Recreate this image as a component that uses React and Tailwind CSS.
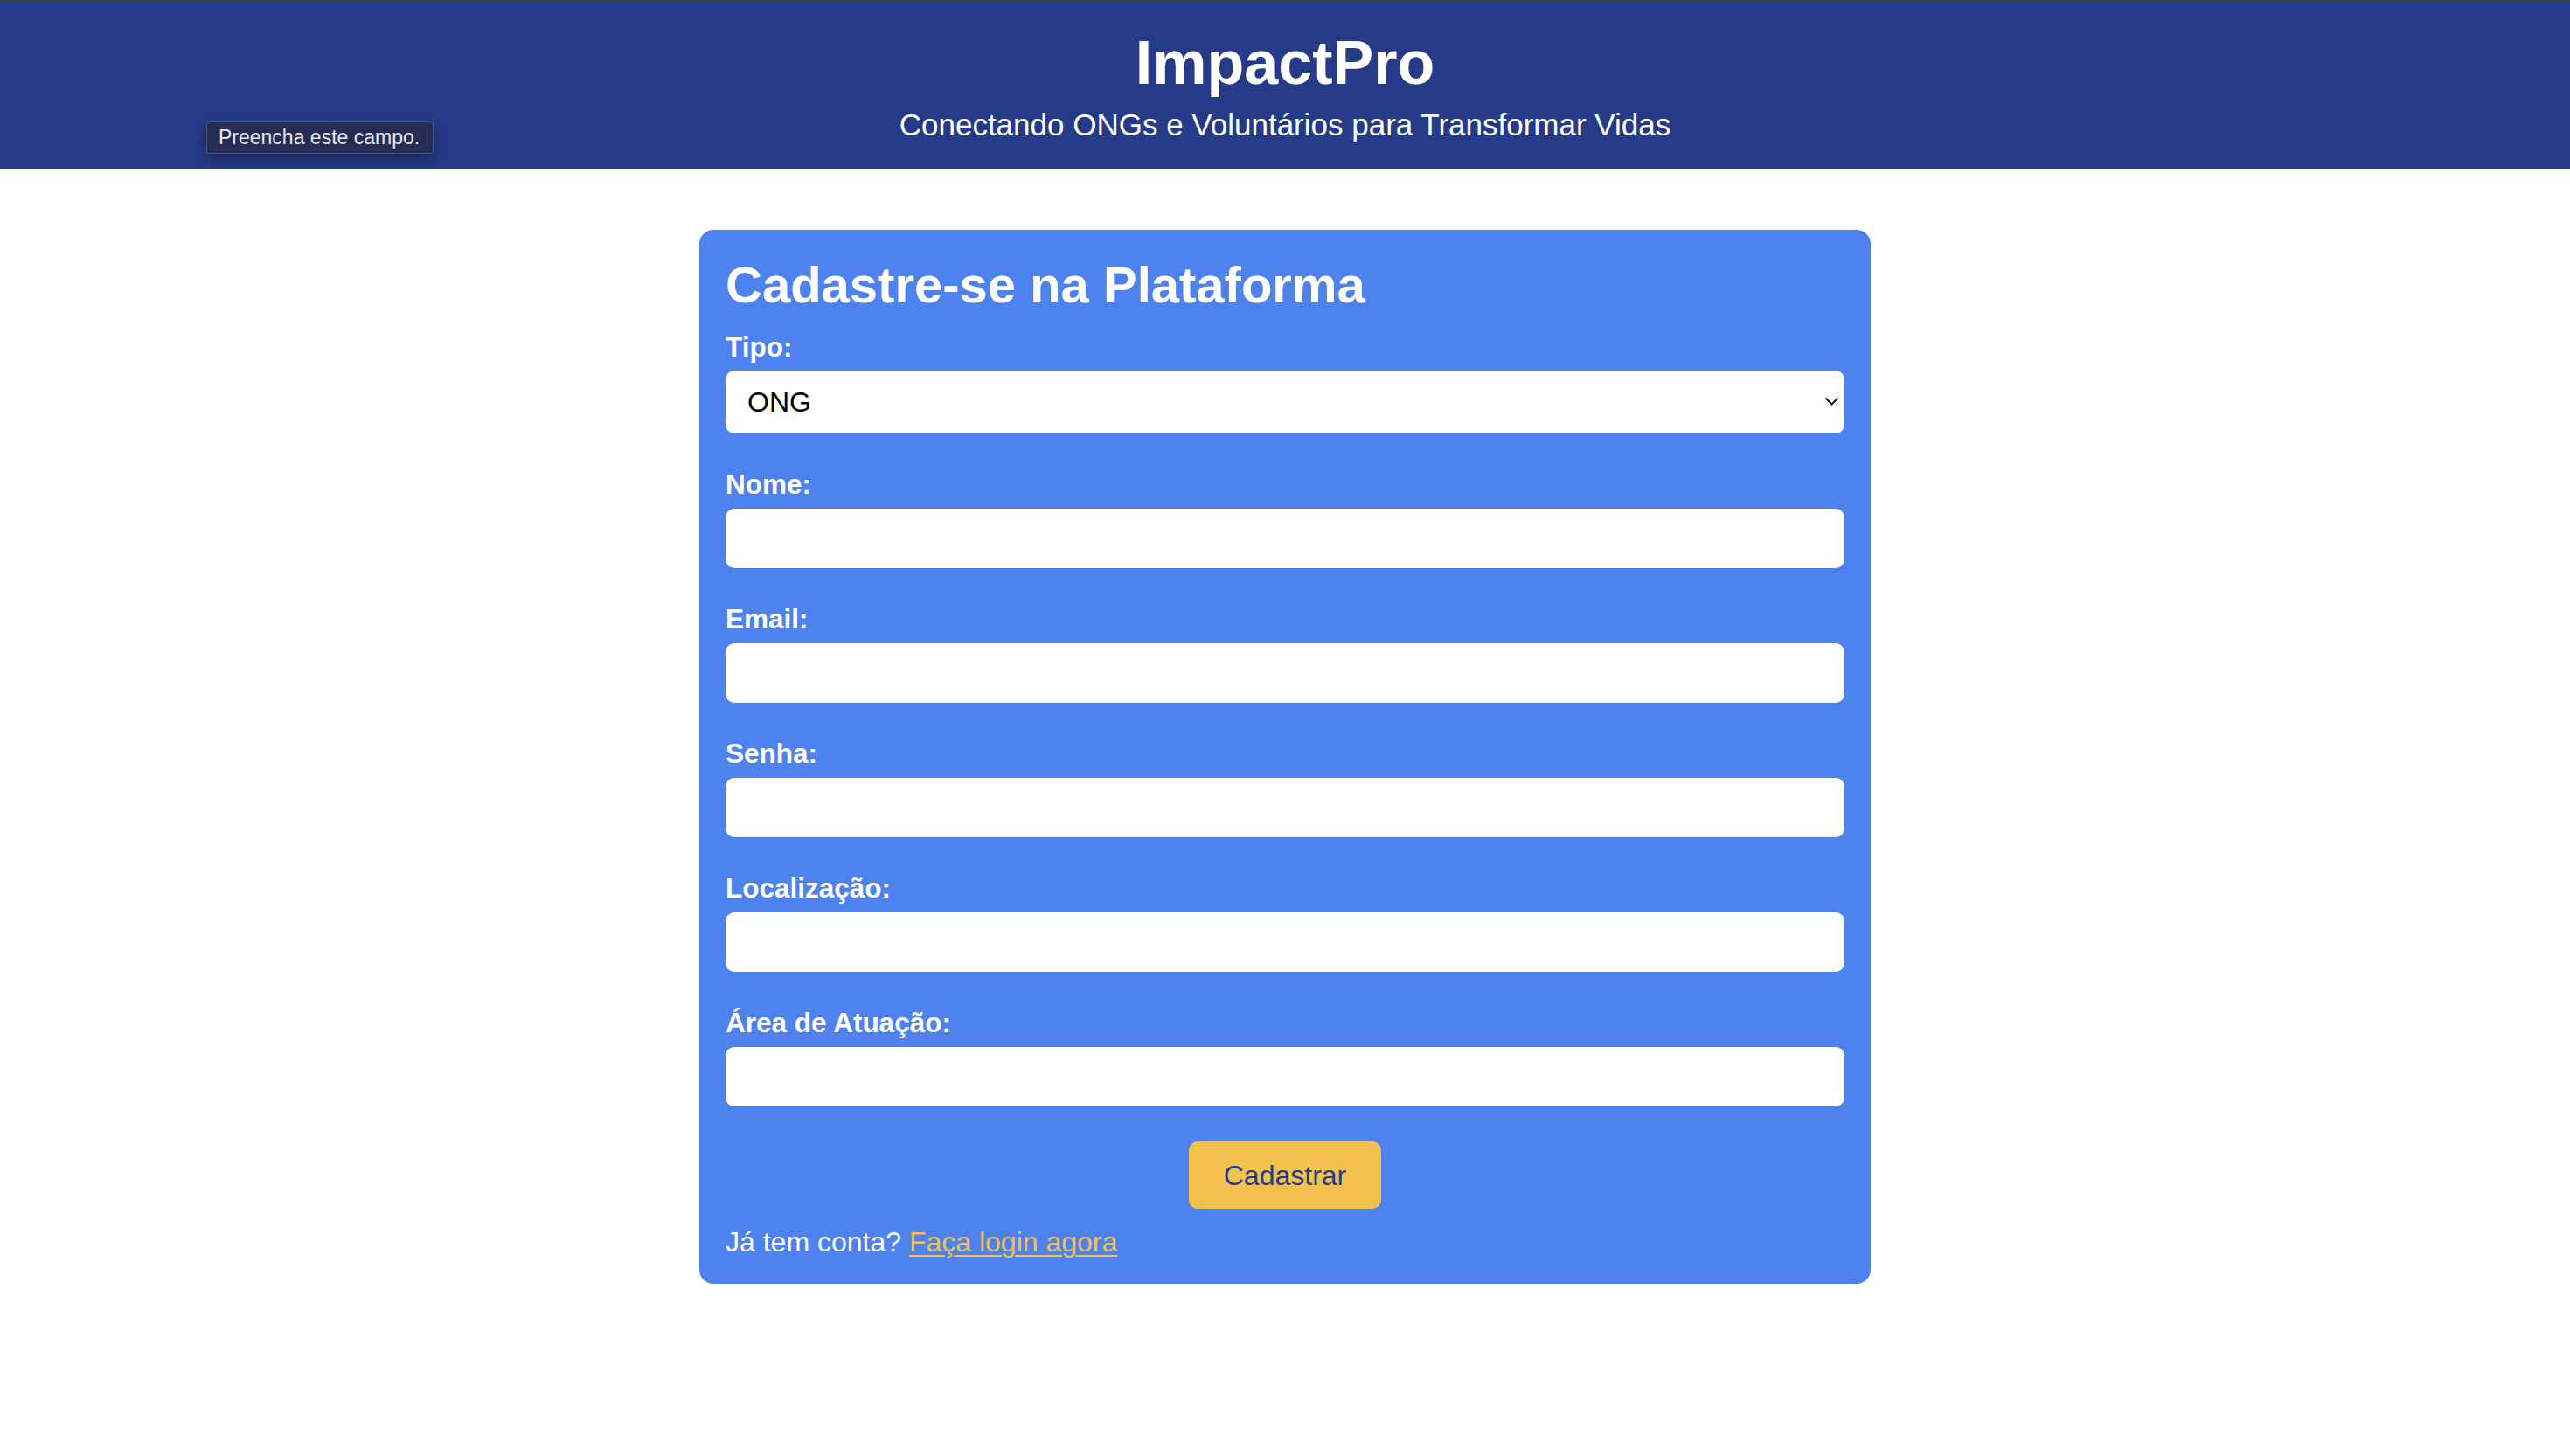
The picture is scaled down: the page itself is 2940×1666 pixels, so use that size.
import React from "react";

function Field({ label }) {
  return (
    <div>
      <label className="block text-[31.5px] leading-[36px] font-bold mb-[10px]">{label}</label>
      <input
        type="text"
        className="block w-full h-[68px] bg-white rounded-[10px] outline-none border-0 mb-[40px] px-[20px] text-[32px] text-black"
      />
    </div>
  );
}

export default function App() {
  return (
    <div className="relative min-h-screen bg-white font-['Liberation_Sans',Arial,sans-serif]">
      <div className="h-[2px] bg-[#3d3d3f]" />
      <header className="bg-[#263b87] text-white text-center pt-[31px] pb-[30px]">
        <h1 className="text-[70px] leading-[78px] font-bold mb-[12px]">ImpactPro</h1>
        <p className="text-[35px] leading-[40px]">Conectando ONGs e Voluntários para Transformar Vidas</p>
      </header>

      <div className="absolute left-[236px] top-[139px] h-[37px] w-[260px] flex items-center px-[13px] bg-[#262d55] border border-[#4f5577] rounded-[3px] shadow-[0_6px_14px_rgba(0,0,0,0.35)]">
        <span className="text-[23px] leading-none text-[#e6e7ec]">Preencha este campo.</span>
      </div>

      <main className="pt-[70px] pb-[100px]">
        <div className="mx-auto w-[1340px] bg-[#4e82ee] rounded-[16px] p-[30px] text-white">
          <h2 className="text-[58px] leading-[66px] font-bold mb-[20px]">Cadastre-se na Plataforma</h2>

          <label className="block text-[31.5px] leading-[36px] font-bold mb-[9px]">Tipo:</label>
          <div className="relative mb-[40px]">
            <select
              defaultValue="ONG"
              className="block w-full h-[72px] appearance-none bg-white rounded-[10px] outline-none border-0 pl-[25px] text-[32px] text-black"
            >
              <option value="ONG">ONG</option>
              <option value="Voluntário">Voluntário</option>
            </select>
            <svg
              className="absolute right-[6px] top-[30px] pointer-events-none"
              width="17"
              height="11"
              viewBox="0 0 17 11"
              fill="none"
            >
              <path d="M1.5 1.5 L8.5 8.5 L15.5 1.5" stroke="#1f1f1f" strokeWidth="2.2" />
            </svg>
          </div>

          <Field label="Nome:" />
          <Field label="Email:" />
          <Field label="Senha:" />
          <Field label="Localização:" />
          <Field label="Área de Atuação:" />

          <div className="flex justify-center mb-[20px]">
            <button className="w-[220px] h-[77px] bg-[#f2c14e] rounded-[10px] text-[32px] text-[#263b87]">
              Cadastrar
            </button>
          </div>

          <p className="text-[32px] leading-[36px]">
            Já tem conta?{" "}
            <a href="#" className="text-[#f2c14e] underline underline-offset-[4px] decoration-2">
              Faça login agora
            </a>
          </p>
        </div>
      </main>
    </div>
  );
}
